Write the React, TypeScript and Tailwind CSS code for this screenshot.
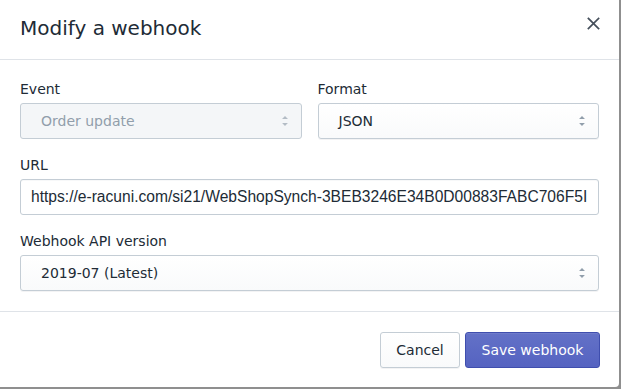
import React from "react";

const FONT = "font-['DejaVu_Sans',sans-serif]";

function Caret({ disabled }: { disabled?: boolean }) {
  return (
    <svg
      viewBox="0 0 20 20"
      className={`h-5 w-5 ${disabled ? "fill-[#b3bcc5]" : "fill-[#919eab]"}`}
    >
      <path d="M13 8l-3-3-3 3h6zm-.1 4L10 15l-2.9-3h5.8z" />
    </svg>
  );
}

function Field({ label, children }: { label: string; children: React.ReactNode }) {
  return (
    <div className="flex flex-col">
      <label className="mb-1 h-5 text-[14px] leading-5 text-[#212b36]">{label}</label>
      {children}
    </div>
  );
}

function Select({ value, disabled }: { value: string; disabled?: boolean }) {
  return (
    <div
      className={`flex h-9 items-center justify-between rounded-[3px] border pl-5 pr-[6px] ${
        disabled
          ? "border-[#c4cdd5] bg-[#f4f6f8] text-[#919eab]"
          : "border-[#c4cdd5] bg-gradient-to-b from-white to-[#f9fafb] text-[#212b36] shadow-[0_1px_0_rgba(22,29,37,0.05)]"
      }`}
    >
      <span className="text-[14px]">{value}</span>
      <Caret disabled={disabled} />
    </div>
  );
}

export default function App() {
  return (
    <div className={`h-[389px] w-[621px] overflow-hidden bg-[#8f8f8f] ${FONT}`}>
      <div className="flex h-[387px] w-[619px] flex-col rounded-br-[4px] bg-white">
        {/* Header */}
        <div className="flex h-[60px] shrink-0 items-center justify-between border-b border-[#dfe3e8] px-5">
          <h2 className="mb-[4px] text-[20px] leading-7 text-[#212b36]">Modify a webhook</h2>
          <button className="-mr-[4px] mb-[12px] flex h-5 w-5 items-center justify-center text-[#454f5b]">
            <svg viewBox="0 0 14 14" className="h-[13px] w-[13px]" stroke="currentColor" strokeWidth={1.8} strokeLinecap="square">
              <path d="M1.5 1.5l11 11M12.5 1.5l-11 11" />
            </svg>
          </button>
        </div>

        {/* Body */}
        <div className="flex flex-col gap-4 border-b border-[#dfe3e8] px-5 pb-5 pt-[19px]">
          <div className="grid grid-cols-2 gap-4">
            <Field label="Event">
              <Select value="Order update" disabled />
            </Field>
            <Field label="Format">
              <Select value="JSON" />
            </Field>
          </div>
          <Field label="URL">
            <div className="flex h-9 items-center overflow-hidden rounded-[3px] border border-[#c4cdd5] bg-white px-[10px] shadow-[inset_0_1px_0_rgba(99,115,129,0.05)]">
              <span className="whitespace-nowrap font-['Liberation_Sans',sans-serif] text-[15.6px] text-[#212b36]">
                https://e-racuni.com/si21/WebShopSynch-3BEB3246E34B0D00883FABC706F5I
              </span>
            </div>
          </Field>
          <Field label="Webhook API version">
            <Select value="2019-07 (Latest)" />
          </Field>
        </div>

        {/* Footer */}
        <div className="flex justify-end gap-[5px] pl-5 pr-[19px] pt-5">
          <button className="h-9 w-20 rounded-[3px] border border-[#c4cdd5] bg-gradient-to-b from-white to-[#f9fafb] text-[14px] text-[#212b36] shadow-[0_1px_0_rgba(22,29,37,0.05)]">
            Cancel
          </button>
          <button className="h-9 w-[135px] rounded-[3px] border border-[#3f4eae] bg-gradient-to-b from-[#6371c7] to-[#5563c1] text-[14px] text-white shadow-[inset_0_1px_0_#6f7bcb]">
            Save webhook
          </button>
        </div>
      </div>
    </div>
  );
}
